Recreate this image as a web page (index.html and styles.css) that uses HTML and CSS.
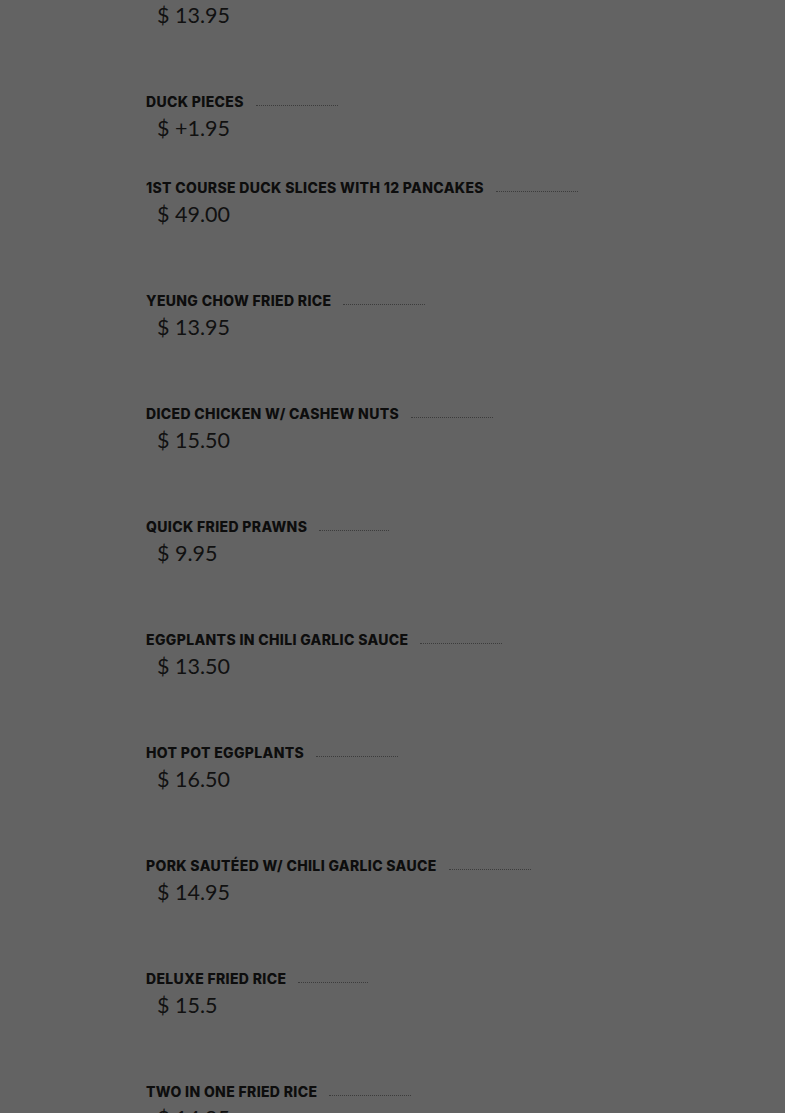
FILE: index.html
```html
<!DOCTYPE html>
<html lang="en">
<head>
<meta charset="utf-8">
<title>Menu</title>
<link rel="stylesheet" href="styles.css">
</head>
<body>
<main class="menu">
  <div class="item item-cut">
    <div class="price">$ 13.95</div>
  </div>
  <div class="item item-addon">
    <div class="title-row"><span class="title">Duck Pieces</span><span class="leader"></span></div>
    <div class="price">$ +1.95</div>
  </div>
  <div class="item">
    <div class="title-row"><span class="title">1st Course Duck Slices with 12 Pancakes</span><span class="leader"></span></div>
    <div class="price">$ 49.00</div>
  </div>
  <div class="item">
    <div class="title-row"><span class="title">Yeung Chow Fried Rice</span><span class="leader"></span></div>
    <div class="price">$ 13.95</div>
  </div>
  <div class="item">
    <div class="title-row"><span class="title">Diced Chicken w/ Cashew Nuts</span><span class="leader"></span></div>
    <div class="price">$ 15.50</div>
  </div>
  <div class="item">
    <div class="title-row"><span class="title">Quick Fried Prawns</span><span class="leader leader-short"></span></div>
    <div class="price">$ 9.95</div>
  </div>
  <div class="item">
    <div class="title-row"><span class="title">Eggplants in Chili Garlic Sauce</span><span class="leader"></span></div>
    <div class="price">$ 13.50</div>
  </div>
  <div class="item">
    <div class="title-row"><span class="title">Hot Pot Eggplants</span><span class="leader"></span></div>
    <div class="price">$ 16.50</div>
  </div>
  <div class="item">
    <div class="title-row"><span class="title">Pork Sautéed w/ Chili Garlic Sauce</span><span class="leader"></span></div>
    <div class="price">$ 14.95</div>
  </div>
  <div class="item">
    <div class="title-row"><span class="title">Deluxe Fried Rice</span><span class="leader leader-short"></span></div>
    <div class="price">$ 15.5</div>
  </div>
  <div class="item">
    <div class="title-row"><span class="title">Two in One Fried Rice</span><span class="leader"></span></div>
    <div class="price">$ 14.95</div>
  </div>
</main>
</body>
</html>
```
FILE: styles.css
```css
html, body {
  margin: 0;
  padding: 0;
  background: #636363;
  overflow: hidden;
}
.menu {
  display: flex;
  flex-direction: column;
  padding-left: 146px;
  color: #0d0d0d;
}
.item {
  display: flex;
  flex-direction: column;
  margin-bottom: 61px;
}
.item-cut {
  margin-top: -1px;
}
.item-addon {
  margin-bottom: 34px;
}
.title-row {
  display: flex;
  align-items: flex-end;
  height: 20px;
}
.title {
  font-family: "Inter", "Liberation Sans", sans-serif;
  font-weight: 800;
  font-size: 14px;
  letter-spacing: 0.35px;
  line-height: 20px;
  text-transform: uppercase;
  white-space: nowrap;
}
.leader {
  width: 82px;
  margin-left: 12px;
  margin-bottom: 6px;
  border-bottom: 1px dotted #3c3c3c;
}
.leader-short {
  width: 70px;
}
.price {
  font-family: "Lato", "Liberation Sans", sans-serif;
  font-size: 21.5px;
  line-height: 31px;
  margin-top: 1px;
  padding-left: 11px;
  color: #111;
}
```
